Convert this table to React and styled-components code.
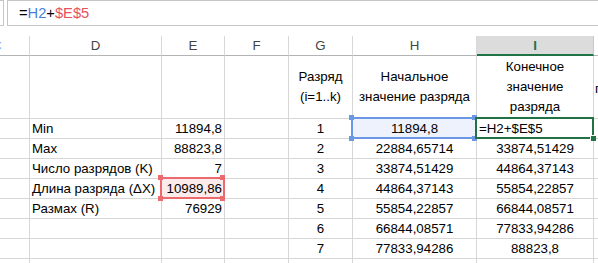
import React from "react";
import styled, { createGlobalStyle, css } from "styled-components";

const GlobalStyle = createGlobalStyle`
    html, body {
        margin: 0;
        padding: 0;
        background: #ffffff;
        overflow: hidden;
    }
    body {
        font-family: "Liberation Sans", Arial, sans-serif;
        color: #000000;
    }
`;

const COLS = "30px 132px 63px 64px 64px 124px 117px 1fr";

const rows = [
    ["Min", "11894,8", "1", "11894,8", "=H2+$E$5"],
    ["Max", "88823,8", "2", "22884,65714", "33874,51429"],
    ["Число разрядов (K)", "7", "3", "33874,51429", "44864,37143"],
    ["Длина разряда (ΔX)", "10989,86", "4", "44864,37143", "55854,22857"],
    ["Размах (R)", "76929", "5", "55854,22857", "66844,08571"],
    ["", "", "6", "66844,08571", "77833,94286"],
    ["", "", "7", "77833,94286", "88823,8"],
    ["", "", "", "", ""],
];

const App = () => {
    return (
        <Page>
            <GlobalStyle />
            <FormulaBar>
                <NameBoxEdge />
                <FormulaInput>
                    =<Ref color="#4a7fe0">H2</Ref>+<Ref color="#e8505b">$E$5</Ref>
                </FormulaInput>
            </FormulaBar>
            <Sheet>
                <ColHead>
                    <CutLetter>C</CutLetter>
                </ColHead>
                <ColHead>D</ColHead>
                <ColHead>E</ColHead>
                <ColHead>F</ColHead>
                <ColHead>G</ColHead>
                <ColHead>H</ColHead>
                <ColHead active>I</ColHead>
                <ColHead last />

                <Cell tall />
                <Cell tall />
                <Cell tall />
                <Cell tall />
                <Cell tall align="center">
                    <Wrap>
                        Разряд
                        <br />
                        (i=1..k)
                    </Wrap>
                </Cell>
                <Cell tall align="center">
                    <Wrap>
                        Начальное
                        <br />
                        значение разряда
                    </Wrap>
                </Cell>
                <Cell tall align="center">
                    <Wrap>
                        Конечное
                        <br />
                        значение
                        <br />
                        разряда
                    </Wrap>
                </Cell>
                <Cell tall last>
                    <CutText>п</CutText>
                </Cell>

                {rows.map((r, i) => (
                    <React.Fragment key={i}>
                        <Cell />
                        <Cell align="left">{r[0]}</Cell>
                        <Cell align="right">
                            {i === 3 && <Mark tone="red" />}
                            <Value>{r[1]}</Value>
                        </Cell>
                        <Cell />
                        <Cell align="center">{r[2]}</Cell>
                        <Cell align="center">
                            {i === 0 && <Mark tone="blue" />}
                            <Value>{r[3]}</Value>
                        </Cell>
                        <Cell align={i === 0 ? "left" : "center"}>
                            {i === 0 && <ActiveCell />}
                            <Value>{r[4]}</Value>
                        </Cell>
                        <Cell last />
                    </React.Fragment>
                ))}
            </Sheet>
        </Page>
    );
};

export default App;

const Page = styled.div`
    width: 598px;
    height: 263px;
    overflow: hidden;
`;

const FormulaBar = styled.div`
    display: flex;
    height: 26px;
    box-sizing: border-box;
`;

const NameBoxEdge = styled.div`
    width: 4px;
    border-top: 1px solid #c6c6c6;
    border-right: 1px solid #c6c6c6;
    border-bottom: 1px solid #c6c6c6;
    box-sizing: border-box;
`;

const FormulaInput = styled.div`
    flex: 1;
    margin-left: 3px;
    border: 1px solid #c6c6c6;
    border-right: none;
    box-sizing: border-box;
    padding-left: 11px;
    font-size: 14.7px;
    line-height: 24px;
    color: #000;
`;

const Ref = styled.span`
    color: ${(p) => p.color};
`;

const Sheet = styled.div`
    display: grid;
    grid-template-columns: ${COLS};
    grid-template-rows: 20px 63px repeat(8, 20px);
    margin-top: 10px;
    font-size: 13.3px;
`;

const ColHead = styled.div`
    position: relative;
    display: flex;
    align-items: center;
    justify-content: center;
    box-sizing: border-box;
    border-right: 1px solid #d8d8d8;
    border-bottom: 1px solid #b4b4b4;
    color: #444444;
    font-size: 13.3px;
    overflow: hidden;
    ${(p) =>
        p.active &&
        css`
            background: #dcdcdc;
            color: #217346;
            font-weight: bold;
            border-bottom: 2px solid #217346;
            border-right-color: #c8c8c8;
        `}
    ${(p) =>
        p.last &&
        css`
            border-right: none;
        `}
`;

const CutLetter = styled.span`
    position: absolute;
    left: -8px;
    color: #7a9cc8;
`;

const Cell = styled.div`
    position: relative;
    display: flex;
    align-items: center;
    justify-content: ${(p) =>
        p.align === "right" ? "flex-end" : p.align === "center" ? "center" : "flex-start"};
    padding: 0 2px;
    text-align: ${(p) => p.align || "left"};
    box-sizing: border-box;
    border-right: 1px solid #d6d6d6;
    border-bottom: 1px solid #d6d6d6;
    white-space: nowrap;
    line-height: 19px;
    ${(p) =>
        p.last &&
        css`
            border-right: none;
            padding: 0 1px;
            overflow: hidden;
        `}
`;

const Wrap = styled.div`
    line-height: 20px;
    text-align: center;
`;

const Value = styled.span`
    position: relative;
    z-index: 2;
`;

const CutText = styled.span`
    padding-top: 2px;
`;

const tones = {
    blue: { line: "#6a98e6", fill: "#edf2fc" },
    red: { line: "#ec6a6e", fill: "#fdeaea" },
};

const Mark = styled.div`
    position: absolute;
    left: -2px;
    top: -2px;
    right: -1px;
    bottom: -1px;
    border: 2px solid ${(p) => tones[p.tone].line};
    background: ${(p) => tones[p.tone].fill};
    z-index: 1;

    &::before,
    &::after {
        content: "";
        position: absolute;
        width: 5px;
        height: 5px;
        background: ${(p) => tones[p.tone].line};
        left: -4px;
        top: -4px;
        box-shadow: ${(p) =>
            `${p.tone === "blue" ? 123 : 62}px 0 0 ${tones[p.tone].line}`};
    }

    &::after {
        top: auto;
        bottom: -4px;
    }
`;

const ActiveCell = styled.div`
    position: absolute;
    left: -2px;
    top: -2px;
    right: -1px;
    bottom: -1px;
    border: 2px solid #217346;
    z-index: 1;

    &::after {
        content: "";
        position: absolute;
        right: -4px;
        bottom: -4px;
        width: 5px;
        height: 5px;
        background: #217346;
        border-left: 1px solid #fff;
        border-top: 1px solid #fff;
    }
`;
